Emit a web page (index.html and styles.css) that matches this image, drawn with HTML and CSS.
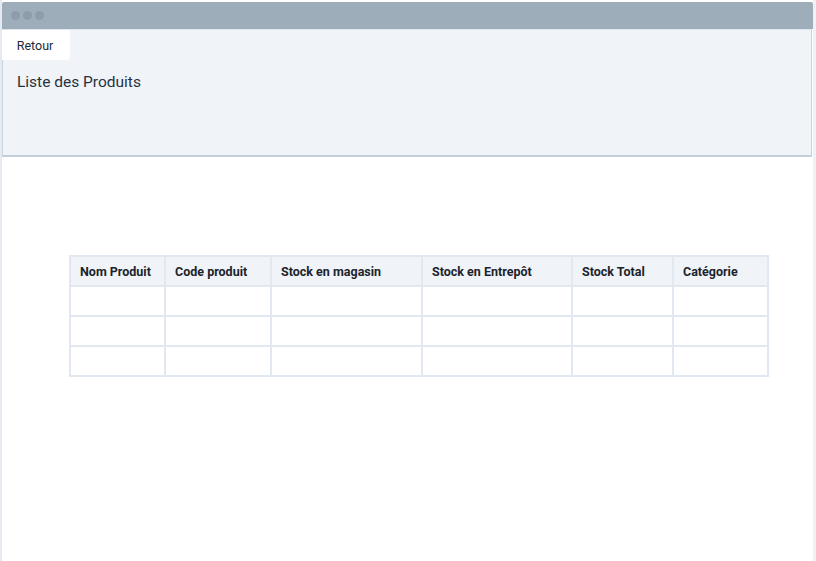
FILE: index.html
```html
<!DOCTYPE html>
<html lang="fr">
<head>
<meta charset="utf-8">
<title>Liste des Produits</title>
<link rel="stylesheet" href="styles.css">
</head>
<body>
<div class="window">
  <div class="titlebar">
    <span class="dot"></span><span class="dot"></span><span class="dot"></span>
  </div>
  <div class="header">
    <button class="back">Retour</button>
    <h1 class="title">Liste des Produits</h1>
  </div>
  <div class="content">
    <table class="grid">
      <colgroup>
        <col class="c1"><col class="c2"><col class="c3"><col class="c4"><col class="c5"><col class="c6">
      </colgroup>
      <thead>
        <tr>
          <th>Nom Produit</th>
          <th>Code produit</th>
          <th>Stock en magasin</th>
          <th>Stock en Entrepôt</th>
          <th>Stock Total</th>
          <th>Catégorie</th>
        </tr>
      </thead>
      <tbody>
        <tr><td></td><td></td><td></td><td></td><td></td><td></td></tr>
        <tr><td></td><td></td><td></td><td></td><td></td><td></td></tr>
        <tr><td></td><td></td><td></td><td></td><td></td><td></td></tr>
      </tbody>
    </table>
  </div>
</div>
</body>
</html>
```
FILE: styles.css
```css
html, body {
  margin: 0;
  padding: 0;
  background: #ffffff;
}
body {
  font-family: Roboto, "Liberation Sans", sans-serif;
  color: #1f2937;
}
.window {
  box-sizing: border-box;
  width: 816px;
  height: 561px;
  padding-top: 2px;
  border-left: 2px solid #e6ebf1;
  border-right: 3px solid #eef1f5;
  display: flex;
  flex-direction: column;
}
.titlebar {
  height: 27px;
  background: #9eadba;
  border-radius: 2px 2px 0 0;
  display: flex;
  align-items: center;
  gap: 3px;
  padding-left: 9px;
  flex-shrink: 0;
}
.dot {
  width: 9px;
  height: 9px;
  border-radius: 50%;
  background: #8e9dab;
}
.header {
  box-sizing: border-box;
  height: 128px;
  background: #f0f4f8;
  border: 1px solid #c9d3dd;
  border-top-color: #dfe6ed;
  border-bottom: 2px solid #c3ced9;
  margin-right: 1px;
  flex-shrink: 0;
}
.back {
  display: block;
  border: none;
  background: #ffffff;
  width: 68px;
  height: 30px;
  margin: 0 0 0 -1px;
  border-radius: 0 0 3px 0;
  font-family: inherit;
  font-size: 12.5px;
  color: #1f2937;
  padding: 1px 2px 0 0;
}
.title {
  margin: 13px 0 0 14px;
  font-size: 15.5px;
  font-weight: 400;
  color: #27313d;
  line-height: 18px;
}
.content {
  flex: 1;
  padding-top: 98px;
  padding-left: 67px;
}
.grid {
  border-collapse: collapse;
  width: 698px;
  table-layout: fixed;
}
.c1 { width: 95px; }
.c2 { width: 106px; }
.c3 { width: 151px; }
.c4 { width: 150px; }
.c5 { width: 101px; }
.c6 { width: 95px; }
.grid th, .grid td {
  border: 2px solid #e2e8ef;
  height: 28px;
  padding: 0 0 0 9px;
}
.grid th {
  background: #f0f4f8;
  text-align: left;
  font-size: 12.5px;
  font-weight: 700;
  color: #1c232c;
  white-space: nowrap;
}
```
